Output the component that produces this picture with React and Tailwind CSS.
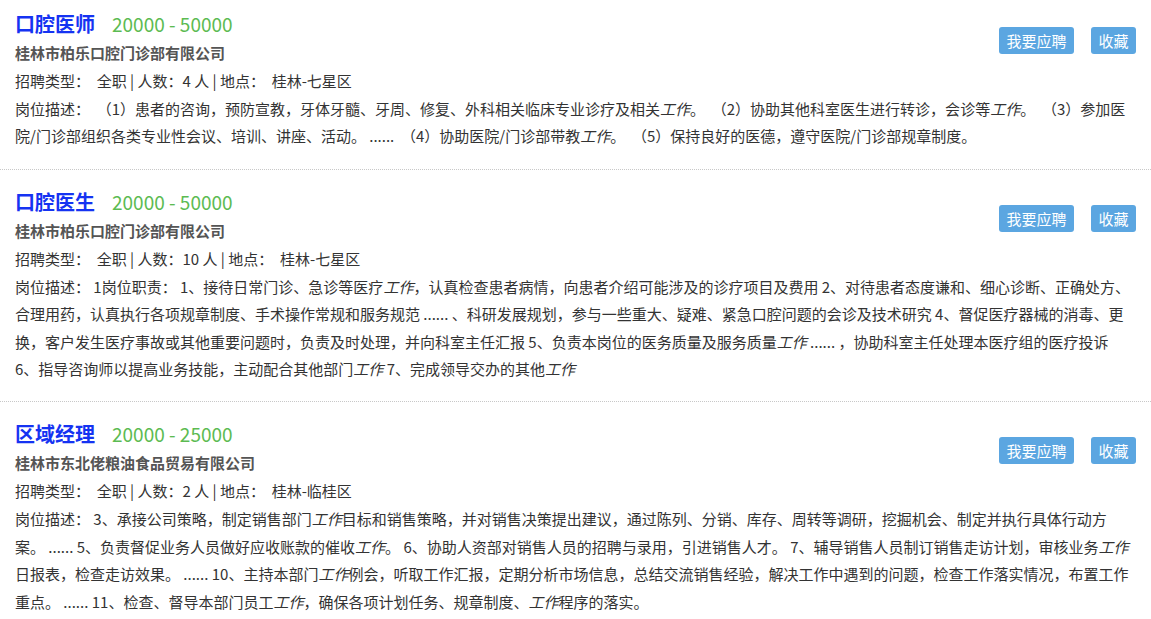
import React from "react";

const I = ({ children }) => <i className="italic">{children}</i>;

const jobs = [
  {
    title: "口腔医师",
    salary: "20000 - 50000",
    company: "桂林市柏乐口腔门诊部有限公司",
    count: "4",
    place: "桂林-七星区",
    lines: [
      <>岗位描述：  （1）患者的咨询，预防宣教，牙体牙髓、牙周、修复、外科相关临床专业诊疗及相关<I>工作</I>。  （2）协助其他科室医生进行转诊，会诊等<I>工作</I>。  （3）参加医</>,
      <>院/门诊部组织各类专业性会议、培训、讲座、活动。 ......  （4）协助医院/门诊部带教<I>工作</I>。  （5）保持良好的医德，遵守医院/门诊部规章制度。</>,
    ],
  },
  {
    title: "口腔医生",
    salary: "20000 - 50000",
    company: "桂林市柏乐口腔门诊部有限公司",
    count: "10",
    place: "桂林-七星区",
    lines: [
      <>岗位描述： 1岗位职责： 1、接待日常门诊、急诊等医疗<I>工作</I>，认真检查患者病情，向患者介绍可能涉及的诊疗项目及费用 2、对待患者态度谦和、细心诊断、正确处方、</>,
      <>合理用药，认真执行各项规章制度、手术操作常规和服务规范 ...... 、科研发展规划，参与一些重大、疑难、紧急口腔问题的会诊及技术研究 4、督促医疗器械的消毒、更</>,
      <>换，客户发生医疗事故或其他重要问题时，负责及时处理，并向科室主任汇报 5、负责本岗位的医务质量及服务质量<I>工作</I> ...... ，协助科室主任处理本医疗组的医疗投诉</>,
      <>6、指导咨询师以提高业务技能，主动配合其他部门<I>工作</I> 7、完成领导交办的其他<I>工作</I></>,
    ],
  },
  {
    title: "区域经理",
    salary: "20000 - 25000",
    company: "桂林市东北佬粮油食品贸易有限公司",
    count: "2",
    place: "桂林-临桂区",
    lines: [
      <>岗位描述： 3、承接公司策略，制定销售部门<I>工作</I>目标和销售策略，并对销售决策提出建议，通过陈列、分销、库存、周转等调研，挖掘机会、制定并执行具体行动方</>,
      <>案。 ...... 5、负责督促业务人员做好应收账款的催收<I>工作</I>。 6、协助人资部对销售人员的招聘与录用，引进销售人才。 7、辅导销售人员制订销售走访计划，审核业务<I>工作</I></>,
      <>日报表，检查走访效果。 ...... 10、主持本部门<I>工作</I>例会，听取工作汇报，定期分析市场信息，总结交流销售经验，解决工作中遇到的问题，检查工作落实情况，布置工作</>,
      <>重点。 ...... 11、检查、督导本部门员工<I>工作</I>，确保各项计划任务、规章制度、<I>工作</I>程序的落实。</>,
    ],
  },
];

function Job({ job, first, last }) {
  return (
    <div
      className={`px-[15px] pb-[19px] ${first ? "pt-[9px]" : "pt-[17px]"} ${
        last ? "" : "border-b border-dotted border-[#c8c8c8]"
      }`}
    >
      <div className="flex items-start">
        <div className="flex-1 min-w-0">
          <div className="flex items-baseline h-[30px] leading-[30px]">
            <span className="text-[20px] font-bold text-[#1533f2]">{job.title}</span>
            <span className="ml-[17px] text-[19px] text-[#5cbb52]">{job.salary}</span>
          </div>
          <div className="h-[28px] leading-[28px] text-[15px] font-bold text-[#555555]">
            {job.company}
          </div>
          <div className="h-[28px] leading-[28px] text-[15px] text-[#333333] whitespace-pre">
            {"招聘类型：  全职 | 人数：" + job.count + " 人 | 地点：  " + job.place}
          </div>
        </div>
        <div className="flex gap-[17px] mt-[18px]">
          <button className="h-[27px] px-[7.5px] rounded-[3px] bg-[#5ba6e1] text-white text-[15px] leading-[27px]">
            我要应聘
          </button>
          <button className="h-[27px] px-[7.5px] rounded-[3px] bg-[#5ba6e1] text-white text-[15px] leading-[27px]">
            收藏
          </button>
        </div>
      </div>
      <div className="text-[15px] text-[#333333]">
        {job.lines.map((l, i) => (
          <div key={i} className="h-[27.4px] leading-[27.4px] whitespace-pre">
            {l}
          </div>
        ))}
      </div>
    </div>
  );
}

export default function App() {
  return (
    <div
      className="w-[1151px] h-[619px] overflow-hidden bg-white"
      style={{ fontFamily: '"Noto Sans CJK SC", "Noto Sans", sans-serif' }}
    >
      {jobs.map((j, i) => (
        <Job key={i} job={j} first={i === 0} last={i === jobs.length - 1} />
      ))}
    </div>
  );
}
